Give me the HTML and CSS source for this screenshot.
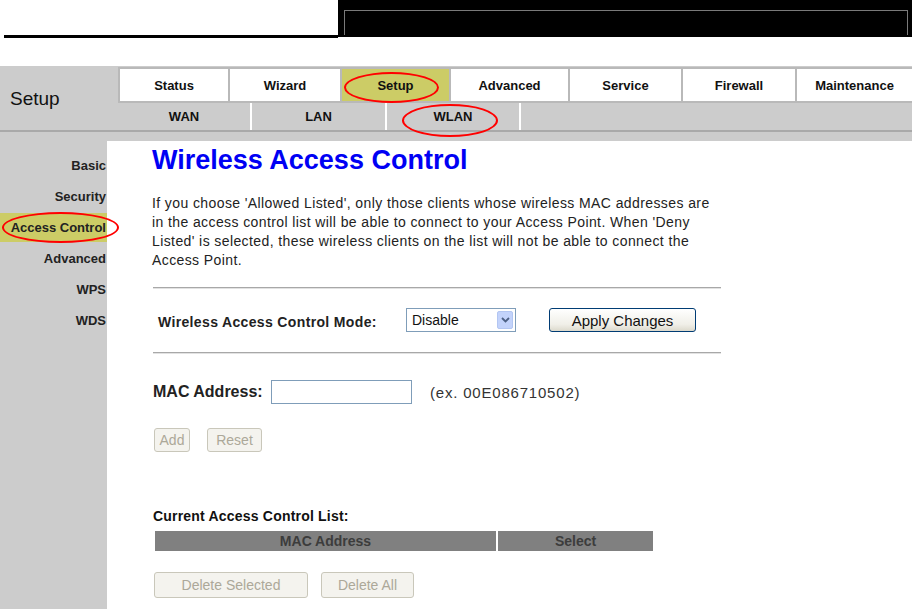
FILE: index.html
```html
<!DOCTYPE html>
<html lang="en">
<head>
<meta charset="utf-8">
<title>Wireless Access Control</title>
<link rel="stylesheet" href="styles.css">
</head>
<body>
<header class="doc-head">
  <div class="head-rule"></div>
  <div class="head-box"><div class="head-frame"></div></div>
</header>

<div class="app">
  <nav class="topnav">
    <div class="section-title">Setup</div>
    <div class="tabs-wrap">
      <ul class="tabs">
        <li class="t-status">Status</li>
        <li class="t-wizard">Wizard</li>
        <li class="t-setup active">Setup</li>
        <li class="t-adv">Advanced</li>
        <li class="t-service">Service</li>
        <li class="t-fw">Firewall</li>
        <li class="t-maint">Maintenance</li>
      </ul>
      <ul class="subtabs">
        <li class="s-wan">WAN</li>
        <li class="s-lan">LAN</li>
        <li class="s-wlan">WLAN</li>
        <li class="s-fill"></li>
      </ul>
    </div>
  </nav>

  <div class="main">
    <aside class="sidebar">
      <div class="side-item">Basic</div>
      <div class="side-item">Security</div>
      <div class="side-item active">Access Control</div>
      <div class="side-item">Advanced</div>
      <div class="side-item">WPS</div>
      <div class="side-item">WDS</div>
    </aside>

    <section class="content">
      <h1 class="page-title">Wireless Access Control</h1>
      <p class="intro">If you choose 'Allowed Listed', only those clients whose wireless MAC addresses are<br>in the access control list will be able to connect to your Access Point. When 'Deny<br>Listed' is selected, these wireless clients on the list will not be able to connect the<br>Access Point.</p>
      <div class="sep"></div>

      <div class="mode-row">
        <span class="mode-label">Wireless Access Control Mode:</span>
        <div class="select">
          <span class="select-value">Disable</span>
          <span class="select-arrow"><svg width="9" height="6" viewBox="0 0 9 6"><path d="M1 1 L4.5 4.5 L8 1" fill="none" stroke="#4d6185" stroke-width="1.8"/></svg></span>
        </div>
        <button class="btn-xp">Apply Changes</button>
      </div>
      <div class="sep sep2"></div>

      <div class="mac-row">
        <span class="mac-label">MAC Address:</span>
        <span class="text-input"></span>
        <span class="hint">(ex. 00E086710502)</span>
      </div>

      <div class="btn-row">
        <span class="btn-dis b-add">Add</span>
        <span class="btn-dis b-reset">Reset</span>
      </div>

      <div class="list-title">Current Access Control List:</div>
      <div class="acl-table">
        <div class="acl-head c-mac">MAC Address</div>
        <div class="acl-head c-sel">Select</div>
      </div>

      <div class="del-row">
        <span class="btn-dis b-delsel">Delete Selected</span>
        <span class="btn-dis b-delall">Delete All</span>
      </div>
    </section>
  </div>

  <div class="mark mark-setup"></div>
  <div class="mark mark-wlan"></div>
  <div class="mark mark-acl"></div>
</div>
</body>
</html>
```

FILE: styles.css
```css
* { box-sizing: border-box; }

html, body {
  margin: 0;
  padding: 0;
  background: #fff;
}

body {
  width: 912px;
  height: 609px;
  overflow: hidden;
  position: relative;
  font-family: "Liberation Sans", Arial, sans-serif;
  color: #111;
}

/* ---------- document header ---------- */
.doc-head {
  display: flex;
  height: 38px;
}
.head-rule {
  width: 334px;
  margin-left: 4px;
  border-bottom: 3px solid #000;
}
.head-box {
  flex: 1;
  height: 37px;
  background: #000;
  padding: 10px 4px 2px 6px;
}
.head-frame {
  height: 100%;
  border: 1px solid #7a7a7a;
  border-bottom: none;
}

/* ---------- app ---------- */
.app {
  margin-top: 28px;
  position: relative;
}

.topnav {
  display: flex;
  background: #cccccc;
  padding-top: 1px;
  border-bottom: 2px solid #a9a9a9;
}
.section-title {
  width: 118px;
  flex: none;
  font-size: 19px;
  padding-left: 10px;
  display: flex;
  align-items: center;
  color: #111;
}
.tabs-wrap {
  flex: 1;
  display: flex;
  flex-direction: column;
}
.tabs, .subtabs {
  list-style: none;
  margin: 0;
  padding: 0;
  display: flex;
}
.tabs {
  background: #b9b9b9;
  padding: 2px 0 2px 2px;
  gap: 2px;
  height: 36px;
}
.tabs li {
  background: #fff;
  display: flex;
  align-items: center;
  justify-content: center;
  font-size: 13px;
  font-weight: bold;
  color: #111;
}
.tabs li.active { background: #cccc66; }
.t-status { width: 108px; }
.t-wizard { width: 110px; }
.t-setup { width: 107px; }
.t-adv { width: 117px; }
.t-service { width: 111px; }
.t-fw { width: 112px; }
.t-maint { width: 115px; }

.subtabs { height: 27px; }
.subtabs li {
  display: flex;
  align-items: center;
  justify-content: center;
  font-size: 13px;
  font-weight: bold;
  color: #111;
  border-right: 2px solid #fff;
}
.s-wan { width: 134px; }
.s-lan { width: 135px; }
.s-wlan { width: 134px; }
.subtabs li.s-fill { flex: 1; border-right: none; }

/* ---------- main ---------- */
.main {
  display: flex;
  background: #cccccc;
  padding-top: 9px;
  height: 477px;
}
.sidebar {
  width: 107px;
  flex: none;
  padding-top: 10px;
  display: flex;
  flex-direction: column;
  gap: 2px;
}
.side-item {
  height: 29px;
  line-height: 29px;
  text-align: right;
  padding-right: 1px;
  font-size: 13px;
  font-weight: bold;
  color: #222;
  white-space: nowrap;
}
.side-item.active { background: #cccc66; }

.content {
  flex: 1;
  background: #fff;
  padding: 4px 0 0 45px;
}
.page-title {
  margin: 0;
  font-size: 27px;
  line-height: 30px;
  font-weight: bold;
  color: #0000f4;
}
.intro {
  margin: 19px 0 0;
  font-size: 14px;
  line-height: 19px;
  letter-spacing: 0.4px;
  color: #222;
  white-space: nowrap;
}
.sep {
  margin: 17px 0 0 1px;
  width: 568px;
  height: 2px;
  border-top: 1px solid #a8a8a8;
  border-bottom: 1px solid #e2e2e2;
}
.sep2 { margin-top: 20px; }

.mode-row {
  margin-top: 19px;
  height: 24px;
  display: flex;
  align-items: center;
}
.mode-label {
  width: 254px;
  flex: none;
  padding-left: 6px;
  font-size: 14px;
  font-weight: bold;
  letter-spacing: 0.35px;
  color: #222;
  padding-top: 4px;
}
.select {
  width: 110px;
  height: 24px;
  border: 1px solid #7f9db9;
  display: flex;
  align-items: center;
  justify-content: space-between;
  padding: 2px 2px 2px 5px;
  font-size: 14px;
  color: #111;
}
.select-arrow {
  width: 16px;
  height: 18px;
  background: #c3d3fb;
  border: 1px solid #b3c6f2;
  border-radius: 2px;
  display: flex;
  align-items: center;
  justify-content: center;
}
.btn-xp {
  margin-left: 33px;
  width: 147px;
  height: 24px;
  border: 1px solid #003c74;
  border-radius: 3px;
  background: linear-gradient(#ffffff, #f0efe8 70%, #dcd9cc);
  font-family: inherit;
  font-size: 15px;
  color: #111;
  padding: 0;
}

.mac-row {
  margin-top: 26px;
  height: 24px;
  display: flex;
  align-items: center;
}
.mac-label {
  width: 119px;
  flex: none;
  padding-left: 1px;
  font-size: 16px;
  font-weight: bold;
  color: #222;
}
.text-input {
  width: 141px;
  height: 24px;
  border: 1px solid #7f9db9;
  background: #fff;
}
.hint {
  margin-left: 18px;
  font-size: 15px;
  letter-spacing: 0.8px;
  color: #333;
}

.btn-row {
  margin-top: 24px;
  display: flex;
  height: 24px;
}
.btn-dis {
  display: flex;
  align-items: center;
  justify-content: center;
  height: 100%;
  border: 1px solid #c9c7ba;
  border-radius: 3px;
  background: #f4f3ee;
  color: #aca899;
  font-size: 14px;
}
.b-add { margin-left: 2px; width: 36px; }
.b-reset { margin-left: 17px; width: 55px; }

.list-title {
  margin-top: 56px;
  padding-left: 1px;
  font-size: 14px;
  line-height: 17px;
  font-weight: bold;
  letter-spacing: 0.2px;
  color: #111;
}
.acl-table {
  margin: 6px 0 0 3px;
  display: grid;
  grid-template-columns: 341px 155px;
  column-gap: 2px;
}
.acl-head {
  height: 20px;
  background: #808080;
  color: #3c3c3c;
  font-size: 14px;
  font-weight: bold;
  display: flex;
  align-items: center;
  justify-content: center;
}

.del-row {
  margin-top: 21px;
  display: flex;
  height: 26px;
}
.b-delsel { margin-left: 2px; width: 154px; }
.b-delall { margin-left: 13px; width: 93px; }

/* ---------- red annotation ellipses ---------- */
.mark {
  position: absolute;
  border: 2px solid #ff0000;
  border-radius: 50%;
}
.mark-setup { left: 344px; top: 6px; width: 95px; height: 31px; }
.mark-wlan { left: 402px; top: 38px; width: 96px; height: 33px; }
.mark-acl { left: 2px; top: 146px; width: 117px; height: 31px; }
```
